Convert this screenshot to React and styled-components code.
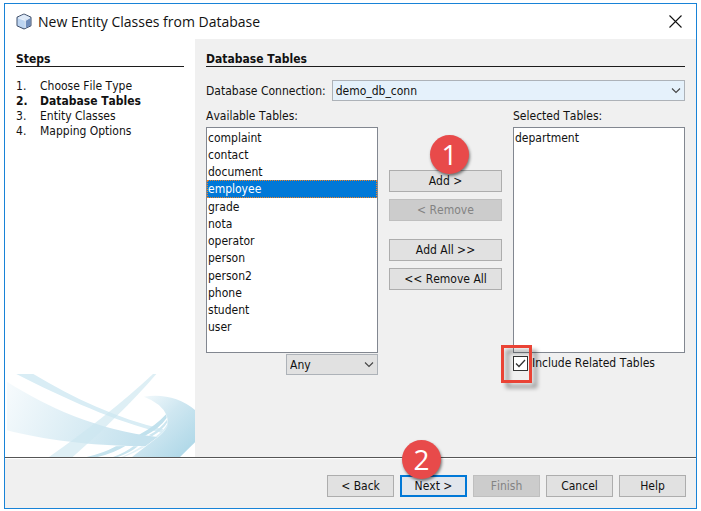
import React, { useState } from "react";
import styled, { createGlobalStyle, css } from "styled-components";

const GlobalStyle = createGlobalStyle`
  *, *::before, *::after { box-sizing: border-box; }
  body { margin: 0; background: #fff; }
  body, button, select, input {
    font-family: "DejaVu Sans Condensed", "DejaVu Sans", sans-serif;
    font-size: 12px;
    font-kerning: none;
    color: #111;
  }
`;

const Page = styled.div`
  min-height: 100vh;
  padding: 3px 4px 2px;
  display: flex;
`;

const Dialog = styled.section`
  flex: 1;
  display: flex;
  flex-direction: column;
  border: 1px solid #1883d7;
  background: #f0f0f0;
`;

const TitleBar = styled.header`
  display: flex;
  align-items: center;
  height: 35px;
  padding: 0 14px 0 11px;
  background: #fff;
`;

const Title = styled.h1`
  flex: 1;
  margin: 0 0 0 6px;
  font: 400 14px/20px "Open Sans", sans-serif;
  color: #111;
`;

const CloseButton = styled.button`
  display: flex;
  padding: 0;
  border: 0;
  background: none;
`;

const Body = styled.div`
  flex: 1;
  display: grid;
  grid-template-columns: 190px 1fr;
`;

const Sidebar = styled.nav`
  display: flex;
  flex-direction: column;
  justify-content: space-between;
  background: #fff;
`;

const StepsBlock = styled.div`
  padding: 13px 11px 0;
`;

const Heading = styled.h2`
  margin: 0;
  border-bottom: 1px solid #1c1c1c;
  font-size: 12px;
  line-height: 14px;
  font-weight: 700;
`;

const StepList = styled.ol`
  list-style: none;
  margin: 0;
  padding: 12px 0 0;
`;

const Step = styled.li`
  display: grid;
  grid-template-columns: 24px 1fr;
  line-height: 15px;
  font-weight: ${(p) => (p.$current ? 700 : 400)};
`;

const Art = styled.svg`
  display: block;
  width: calc(100% - 2px);
  margin-left: 2px;
`;

const Main = styled.main`
  padding: 13px 11px 0;
`;

const ConnectionRow = styled.div`
  display: flex;
  align-items: center;
  gap: 6px;
  padding-top: 13px;
`;

const SelectBox = styled.div`
  position: relative;
  display: flex;
  flex: ${(p) => (p.$wide ? "1" : "none")};
  width: ${(p) => (p.$wide ? "auto" : "92px")};

  svg {
    position: absolute;
    right: 4px;
    top: 7px;
    pointer-events: none;
  }
`;

const Select = styled.select`
  appearance: none;
  width: 100%;
  height: 21px;
  padding: 0 20px 0 3px;
  border: 1px solid #adb2b8;
  border-radius: 0;
  background: ${(p) => (p.$active ? "#e5f1fb" : "#e1e1e1")};
`;

const Columns = styled.div`
  display: grid;
  grid-template-columns: 1fr 113px 1fr;
  column-gap: 11px;
  padding-top: 8px;
`;

const Column = styled.div`
  display: flex;
  flex-direction: column;
`;

const ListLabel = styled.label`
  line-height: 15px;
  padding-bottom: 3px;
`;

const ListBox = styled.select`
  width: 100%;
  height: 226px;
  padding: 1px 0;
  border: 1px solid #828790;
  border-radius: 0;
  outline: 0;
  background: #fff;
  overflow: hidden;

  option {
    min-height: 17px;
    padding: 2px 0 0 1px;
    color: #111;
  }
  option:nth-child(4n) {
    min-height: 18px;
  }
  option:checked {
    background: #0078d7 linear-gradient(#0078d7, #0078d7);
    color: #fff;
    outline: 1px dotted #f58220;
    outline-offset: -1px;
  }
`;

const UnderList = styled.div`
  display: flex;
  justify-content: ${(p) => (p.$end ? "flex-end" : "flex-start")};
  padding-top: 1px;
`;

const Transfer = styled.div`
  display: flex;
  flex-direction: column;
  gap: 18px;
  padding-top: 61px;
`;

const ButtonPair = styled.div`
  display: flex;
  flex-direction: column;
  gap: 7px;
`;

const Anchor = styled.div`
  position: relative;
  display: flex;
`;

const Button = styled.button`
  width: ${(p) => (p.$fill ? "100%" : "67px")};
  height: 22px;
  padding: 0;
  border: 1px solid #adadad;
  background: #e1e1e1;

  &:disabled {
    border-color: #bfbfbf;
    background: #ccc;
    color: #838383;
  }
  ${(p) =>
    p.$primary &&
    css`
      border: 2px solid #0078d7;
      background: #e1e6ec;
    `}
`;

const Badge = styled.span`
  position: absolute;
  left: ${(p) => p.$x}px;
  bottom: 18px;
  width: 39px;
  height: 39px;
  border-radius: 50%;
  background: #e84a4a;
  box-shadow: 1px 2px 3px rgba(0, 0, 0, 0.5);
  color: #fff;
  font: 400 28px/38px "Open Sans", sans-serif;
  text-align: center;
  pointer-events: none;
`;

const CheckLabel = styled.label`
  position: relative;
  display: flex;
  align-items: center;
  gap: 4px;
  padding-top: 2px;
  line-height: 15px;
  white-space: nowrap;
`;

const CheckBox = styled.input`
  appearance: none;
  width: 15px;
  height: 15px;
  margin: 0;
  border: 1px solid #333;
  background: #fff;

  &:not(:checked) + svg { display: none; }
`;

const CheckMark = styled.svg`
  position: absolute;
  left: 2px;
  bottom: 2px;
  pointer-events: none;
`;

const Highlight = styled.span`
  position: absolute;
  left: -12px;
  top: -9px;
  width: 31px;
  height: 38px;
  border: 3px solid #ea4335;
  filter: drop-shadow(5px 5px 2px rgba(0, 0, 0, 0.4));
  pointer-events: none;
`;

const Footer = styled.footer`
  display: flex;
  justify-content: flex-end;
  gap: 6px;
  padding: 17px 10px 11px;
  border-top: 1px solid #555;
  box-shadow: inset 0 1px #fff;
`;

const Chevron = () => (
  <svg width="10" height="7" viewBox="0 0 10 7" fill="none" stroke="#444" strokeWidth="1.1">
    <path d="M1 1.5 5 5.5 9 1.5" />
  </svg>
);

const CubeIcon = () => (
  <svg width="16" height="17" viewBox="0 0 16 17">
    <path d="M8 1 15 4.2v8.6L8 16 1 12.8V4.2Z" fill="#a9c3e6" stroke="#3d4c66" strokeLinejoin="round" />
    <path d="M8 1.6 14.2 4.5 8 7.4 1.8 4.5Z" fill="#dfeaf8" />
    <path d="M1.8 5 9 7.8v7.4l-7.2-2.7Z" fill="#bdd5f1" />
    <path d="M9.6 7.8 14.2 5v7.5l-4.6 2.7Z" fill="#6f8dbb" />
    <path d="M2 4.9 9.3 7.6l4.7-2.8M9.3 7.6v7.4" fill="none" stroke="#f2f7fd" strokeWidth=".8" />
  </svg>
);

const RibbonArt = () => (
  <Art viewBox="21 102 564 249" aria-hidden="true">
    <defs>
      <linearGradient id="sweep" x1="0" y1="0" x2="1" y2="0.2">
        <stop offset="0" stopColor="#f7fbfd" />
        <stop offset="1" stopColor="#c5e2ee" />
      </linearGradient>
      <linearGradient id="curl" x1="0" y1="0" x2="1" y2="1">
        <stop offset="0" stopColor="#fafdfe" />
        <stop offset="0.45" stopColor="#cfe7f1" />
        <stop offset="1" stopColor="#a9d5e6" />
      </linearGradient>
    </defs>
    <path d="M21 125C140 200 290 270 473 291L437 318C290 320 130 300 21 271Z" fill="url(#sweep)" />
    <path d="M49 102H100C220 174 350 235 490 268L484 278C350 246 190 174 49 102Z" fill="#d9edf5" />
    <path d="M459 102H469C395 188 310 270 218 351H147C260 272 370 185 459 102Z" fill="#cde6f0" fillOpacity=".65" />
    <path d="M432 170Q520 157 585 210V307L540 351H396L474 291Q512 264 500 226Q485 190 432 170Z" fill="url(#curl)" />
    <path d="M499 222Q464 260 417 284L435 287Q478 266 500 234Z" fill="#c1e1ed" />
    <path d="M501 239Q482 267 446 286L456 289Q491 268 502 247Z" fill="#cde7f1" />
    <path d="M502 252Q490 274 466 290L474 291Q498 271 503 258Z" fill="#d8edf5" />
    <path d="M348 319 376 318Q340 340 293 351H260Q310 340 348 319Z" fill="#c5e3ee" />
    <path d="M400 319H414Q388 340 353 351H339Q376 338 400 319Z" fill="#c9e5ef" />
    <path d="M424 319H437Q404 339 373 351H365Q402 335 424 319Z" fill="#e2f1f7" />
  </Art>
);

const steps = ["Choose File Type", "Database Tables", "Entity Classes", "Mapping Options"];
const tables = [
  "complaint", "contact", "document", "employee", "grade", "nota",
  "operator", "person", "person2", "phone", "student", "user",
];

export default function App() {
  const [available, setAvailable] = useState(["employee"]);
  const [related, setRelated] = useState(true);

  return (
    <Page>
      <GlobalStyle />
      <Dialog role="dialog" aria-labelledby="dialog-title">
        <TitleBar>
          <CubeIcon />
          <Title id="dialog-title">New Entity Classes from Database</Title>
          <CloseButton type="button" aria-label="Close">
            <svg width="13" height="13" viewBox="0 0 13 13" stroke="#111" strokeWidth="1.1">
              <path d="M.5.5l12 12M12.5.5l-12 12" />
            </svg>
          </CloseButton>
        </TitleBar>
        <Body>
          <Sidebar>
            <StepsBlock>
              <Heading>Steps</Heading>
              <StepList>
                {steps.map((name, i) => (
                  <Step key={name} $current={i === 1}>
                    <span>{i + 1}.</span>
                    <span>{name}</span>
                  </Step>
                ))}
              </StepList>
            </StepsBlock>
            <RibbonArt />
          </Sidebar>
          <Main>
            <Heading>Database Tables</Heading>
            <ConnectionRow>
              <label htmlFor="connection">Database Connection:</label>
              <SelectBox $wide>
                <Select id="connection" $active>
                  <option>demo_db_conn</option>
                </Select>
                <Chevron />
              </SelectBox>
            </ConnectionRow>
            <Columns>
              <Column>
                <ListLabel htmlFor="available">Available Tables:</ListLabel>
                <ListBox
                  id="available"
                  multiple
                  value={available}
                  onChange={(e) => setAvailable(Array.from(e.target.selectedOptions, (o) => o.value))}
                >
                  {tables.map((t) => (
                    <option key={t}>{t}</option>
                  ))}
                </ListBox>
                <UnderList $end>
                  <SelectBox>
                    <Select aria-label="Table filter">
                      <option>Any</option>
                    </Select>
                    <Chevron />
                  </SelectBox>
                </UnderList>
              </Column>
              <Transfer>
                <ButtonPair>
                  <Anchor>
                    <Button type="button" $fill>Add &gt;</Button>
                    <Badge $x={41}>1</Badge>
                  </Anchor>
                  <Button type="button" $fill disabled>&lt; Remove</Button>
                </ButtonPair>
                <ButtonPair>
                  <Button type="button" $fill>Add All &gt;&gt;</Button>
                  <Button type="button" $fill>&lt;&lt; Remove All</Button>
                </ButtonPair>
              </Transfer>
              <Column>
                <ListLabel htmlFor="selected">Selected Tables:</ListLabel>
                <ListBox id="selected" multiple>
                  <option>department</option>
                </ListBox>
                <UnderList>
                  <CheckLabel>
                    <CheckBox type="checkbox" checked={related} onChange={(e) => setRelated(e.target.checked)} />
                    <CheckMark width="11" height="11" viewBox="0 0 11 11" fill="none" stroke="#333" strokeWidth="1.3">
                      <path d="M1 5.5 4 8.5 10 2" />
                    </CheckMark>
                    <span>Include Related Tables</span>
                    <Highlight />
                  </CheckLabel>
                </UnderList>
              </Column>
            </Columns>
          </Main>
        </Body>
        <Footer>
          <Button type="button">&lt; Back</Button>
          <Anchor>
            <Button type="button" $primary>Next &gt;</Button>
            <Badge $x={2}>2</Badge>
          </Anchor>
          <Button type="button" disabled>Finish</Button>
          <Button type="button">Cancel</Button>
          <Button type="button">Help</Button>
        </Footer>
      </Dialog>
    </Page>
  );
}
